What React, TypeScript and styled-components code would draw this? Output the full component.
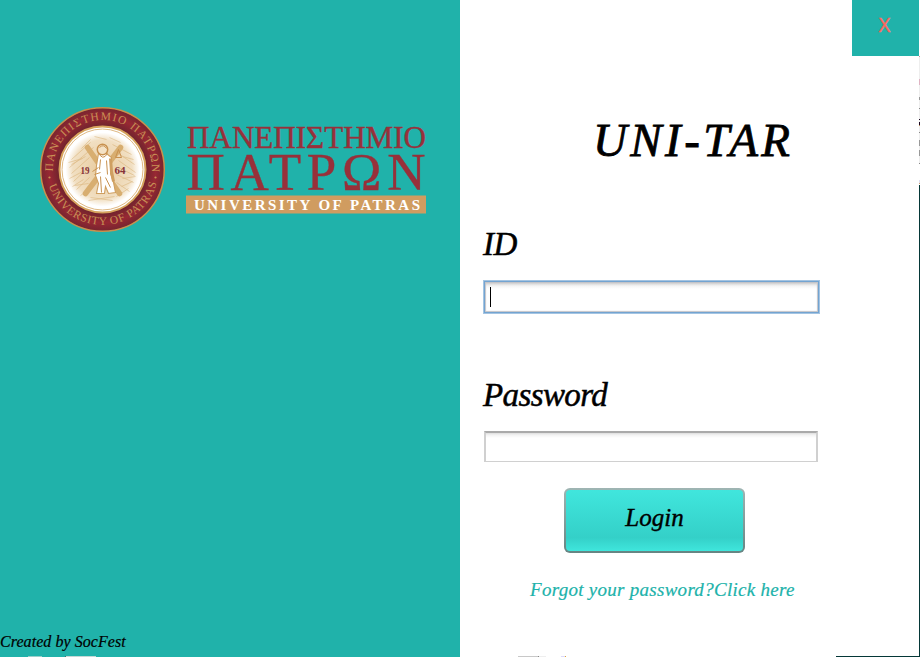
import React from "react";
import styled, { createGlobalStyle } from "styled-components";

const GlobalStyle = createGlobalStyle`
  body { margin: 0; background: #fff; overflow: hidden; }
  *, *::before, *::after { box-sizing: border-box; }
`;

const teal = "#20b2aa";
const scriptFont = `"Viner Hand ITC", "Liberation Serif", serif`;

const Desktop = styled.div`
  width: 920px;
  height: 657px;
  display: grid;
  grid-template-columns: 919px 1px;
  grid-template-rows: 656px 1px;
`;

const Window = styled.main`
  display: grid;
  grid-template-columns: 460px 1fr;
  background: #fff;
  overflow: hidden;
`;

const RightEdge = styled.div`
  grid-row: span 2;
  background: linear-gradient(
    #fff 56px, #c89898 56px 57px, #eee 57px 79px, #dfb3c3 79px 85px, #eee 85px 97px,
    #999 97px 100px, #eee 100px 108px, #888 108px 109px, #eee 109px 119px,
    #1b0620 119px 120px, #eee 120px 122px, #1b0620 122px 125px, #b98c59 125px 126px,
    #eee 126px 132px, #888 132px 133px, #eee 133px 140px, #999 140px 146px,
    #eee 146px 150px, #999 150px 156px, #eee 156px 163px, #888 163px 164px,
    #fff 164px 180px, #dde 180px 183px, #c9a070 183px 184px, #fff 184px 185px, #053737 185px
  );
`;

const BottomEdge = styled.div`
  background: linear-gradient(
    90deg,
    ${teal} 28px, #9ccfcb 28px 42px, ${teal} 42px 65px, #486b68 65px 66px,
    #c5d8d6 66px 96px, ${teal} 96px 460px, #fff 460px 518px,
    #c8c8c8 518px 538px, #888 538px 539px, #eee 539px 546px, #fff 546px 561px,
    #dcd9fa 561px 565px, #e2aa32 565px 566px, #fff 566px 836px, #053737 836px
  );
`;

const BrandPane = styled.section`
  display: flex;
  flex-direction: column;
  justify-content: space-between;
  background: ${teal};
  padding-top: 105px;
`;

const LogoRow = styled.div`
  display: flex;
  gap: 18px;
  padding-left: 38px;
`;

const Script = styled.span<{ $size: number; $line: number; $track?: number; $color?: string; $stroke?: number }>`
  display: block;
  width: max-content;
  white-space: pre;
  font-family: ${scriptFont};
  font-style: italic;
  font-weight: 400;
  font-size: ${(p) => p.$size}px;
  line-height: ${(p) => p.$line}px;
  letter-spacing: ${(p) => p.$track ?? 0}px;
  color: ${(p) => p.$color ?? "#000"};
  -webkit-text-stroke: ${(p) => p.$stroke ?? 0}px currentColor;
`;

const LoginPane = styled.section`
  display: flex;
  flex-direction: column;
`;

const CloseButton = styled.button`
  align-self: flex-end;
  width: 67px;
  height: 56px;
  padding: 0 2px 7px 0;
  border: 0;
  background: ${teal};
  color: #ff6860;
  font: 20px/49px "Open Sans", "Noto Sans", sans-serif;
  -webkit-text-stroke: 0.4px currentColor;
`;

const Title = styled.h1`
  margin: 54px 0 0 133px;
  height: 60px;
`;

const Form = styled.form`
  display: flex;
  flex-direction: column;
  padding: 54px 0 0 23px;
`;

const FieldLabel = styled.label`
  height: 40px;
`;

const FocusedField = styled.div`
  display: flex;
  align-items: center;
  width: 337px;
  height: 34px;
  margin: 16px 0 61px;
  padding-left: 4px;
  border: 1px solid #a4c4e2;
  background: linear-gradient(#bcbcbc, #dedede 3px, #f5f5f5 5px, #fff 8px);
  box-shadow: inset 0 0 0 1px #73a4d1, inset 0 0 1px 2px #c4c4c8;
`;

const Caret = styled.i`
  width: 1px;
  height: 20px;
  margin-left: 2px;
  background: #000;
`;

const Field = styled.div`
  width: 334px;
  height: 31px;
  margin: 16px 0 26px 1px;
  border: 2px solid #d0d0d0;
  border-top-color: #aaa;
  border-bottom-width: 1px;
  background: linear-gradient(#ddd, #f3f3f3 2px, #fff 5px);
`;

const LoginButton = styled.button`
  display: flex;
  justify-content: center;
  width: 181px;
  height: 65px;
  margin-left: 81px;
  padding: 14px 0 0;
  border: 2px solid transparent;
  border-radius: 6px;
  background:
    linear-gradient(#40e6dd, #34d0c8 78%, #3fe6dc) padding-box,
    linear-gradient(#9eb5b3, #668583) border-box;
`;

const ForgotLink = styled.a`
  margin: 22px 0 0 47px;
`;

const Seal = () => (
  <svg width="130" height="130" viewBox="-64.5 -64.5 130 130" role="img" aria-label="University of Patras seal">
    <defs>
      <radialGradient id="ring">
        <stop offset=".72" stopColor="#74242e" />
        <stop offset=".86" stopColor="#982833" />
        <stop offset="1" stopColor="#76252f" />
      </radialGradient>
      <radialGradient id="parchment">
        <stop offset="0" stopColor="#e8ca9d" />
        <stop offset=".8" stopColor="#f1dfc2" />
        <stop offset="1" stopColor="#fff" />
      </radialGradient>
      <path id="upper" d="M-49 7A49.5 49.5 0 1 1 49 7" />
      <path id="lower" d="M-55 10A56 56 0 0 0 55 10" />
    </defs>
    <circle r="61.8" fill="url(#ring)" stroke="#c9914d" strokeWidth="1.5" />
    <circle r="43" fill="#fff" stroke="#d6a35d" strokeWidth="2" />
    <circle r="40.5" fill="#fff" stroke="#dfb984" strokeWidth="1" />
    <circle r="37" fill="url(#parchment)" />
    <g fill="none" stroke="#d7ad70" strokeWidth=".7" opacity=".7">
      <path d="M-31 -10L-12 -27M-33 -2L-9 -22M-31 4L-13 -12M-29 12L-13 -3M-26 20L-13 8M10 -25L29 -15M13 -18L32 -5M16 -9L33 3M14 5L31 13M14 13L27 22M-12 28L10 31M-21 -21L-12 -30M-28 16L-14 14M16 -2L32 6M-31 -5L-17 -13M19 17L30 12" />
      <path d="M-34 -7L-20 -11M-33 9L-18 1M-30 17L-19 10M-22 26L-12 19M-14 31L12 27M14 27L26 19M20 9L33 7M20 -13L31 -10M7 -32L18 -27M-8 -33L4 -30" />
    </g>
    <g stroke="#d8ae70" strokeWidth="5.5" strokeLinecap="round">
      <path d="M-15 -22L17 24M18 -22L-17 24" />
    </g>
    <path d="M-4 -16L-6 -4L-7 6L-4 14L-6 24H2L3 17L6 24L13 23L11 13L8 4L9 -12L4 -16Z" fill="#fff" stroke="#cf9f60" strokeWidth="1.1" />
    <path d="M8 -11L9 2L11 12" stroke="#cf9f60" strokeWidth="3" fill="none" />
    <circle cx="0" cy="-20" r="5.2" fill="#f4e2c6" stroke="#c8914f" strokeWidth="1.5" />
    <path d="M-4 -17Q0 -8 5 -16M-3 -22Q1 -26 4 -21M16 -20L13 -12H19ZM-2 -10L-3 0M4 -9L5 5M3 8L8 18M-2 7L-1 23M-10 2L-4 -2M-8 5L-2 3" fill="none" stroke="#c8914f" />
    <g fontFamily="Liberation Serif, serif" fill="#86333a" fontSize="9.5" fontWeight="700">
      <text x="-22" y="4.5" textLength="9" lengthAdjust="spacingAndGlyphs">19</text>
      <text x="12" y="4.5" textLength="11" lengthAdjust="spacingAndGlyphs">64</text>
    </g>
    <g fontFamily="Liberation Serif, serif" fill="#c89155" fontSize="11.5">
      <text><textPath href="#upper" startOffset="5" textLength="160">ΠΑΝΕΠΙΣΤΗΜΙΟ ΠΑΤΡΩΝ</textPath></text>
      <text><textPath href="#lower" startOffset="6" textLength="145">UNIVERSITY OF PATRAS</textPath></text>
    </g>
    <circle cx="-53" cy="8" r="1.1" fill="#c89155" />
    <circle cx="53" cy="8" r="1.1" fill="#c89155" />
  </svg>
);

const Wordmark = () => (
  <svg width="242" height="130" viewBox="186 105 242 130" role="img" aria-label="University of Patras">
    <g fontFamily="Liberation Serif, serif" fill="#98303a" stroke="#98303a" strokeWidth=".4">
      <text x="187" y="148" fontSize="31" textLength="239" lengthAdjust="spacingAndGlyphs">ΠΑΝΕΠΙΣΤΗΜΙΟ</text>
      <text x="186.5" y="190" fontSize="53" textLength="239">ΠΑΤΡΩΝ</text>
    </g>
    <path d="M186 195.5h240v18h-240z" fill="#d09c60" />
    <text x="194" y="209.5" fontFamily="Liberation Serif, serif" fontWeight="700" fontSize="15" fill="#fff" textLength="226">UNIVERSITY OF PATRAS</text>
  </svg>
);

export default function App() {
  return (
    <>
      <GlobalStyle />
      <Desktop>
        <Window>
          <BrandPane>
            <LogoRow>
              <Seal />
              <Wordmark />
            </LogoRow>
            <Script $size={16} $line={28} $track={0.06} $stroke={0.2}>Created by SocFest</Script>
          </BrandPane>
          <LoginPane>
            <CloseButton aria-label="Close">X</CloseButton>
            <Title><Script $size={47} $line={60} $track={3.4} $stroke={0.8}>UNI-TAR</Script></Title>
            <Form>
              <FieldLabel><Script $size={33} $line={40} $track={-0.6} $stroke={0.5}>ID</Script></FieldLabel>
              <FocusedField><Caret /></FocusedField>
              <FieldLabel><Script $size={33} $line={40} $track={-0.6} $stroke={0.5}>Password</Script></FieldLabel>
              <Field />
              <LoginButton type="button"><Script $size={25} $line={28} $stroke={0.4}>Login</Script></LoginButton>
              <ForgotLink><Script $size={19} $line={30} $track={0.28} $stroke={0.2} $color={teal}>Forgot your password?Click here</Script></ForgotLink>
            </Form>
          </LoginPane>
        </Window>
        <RightEdge />
        <BottomEdge />
      </Desktop>
    </>
  );
}
